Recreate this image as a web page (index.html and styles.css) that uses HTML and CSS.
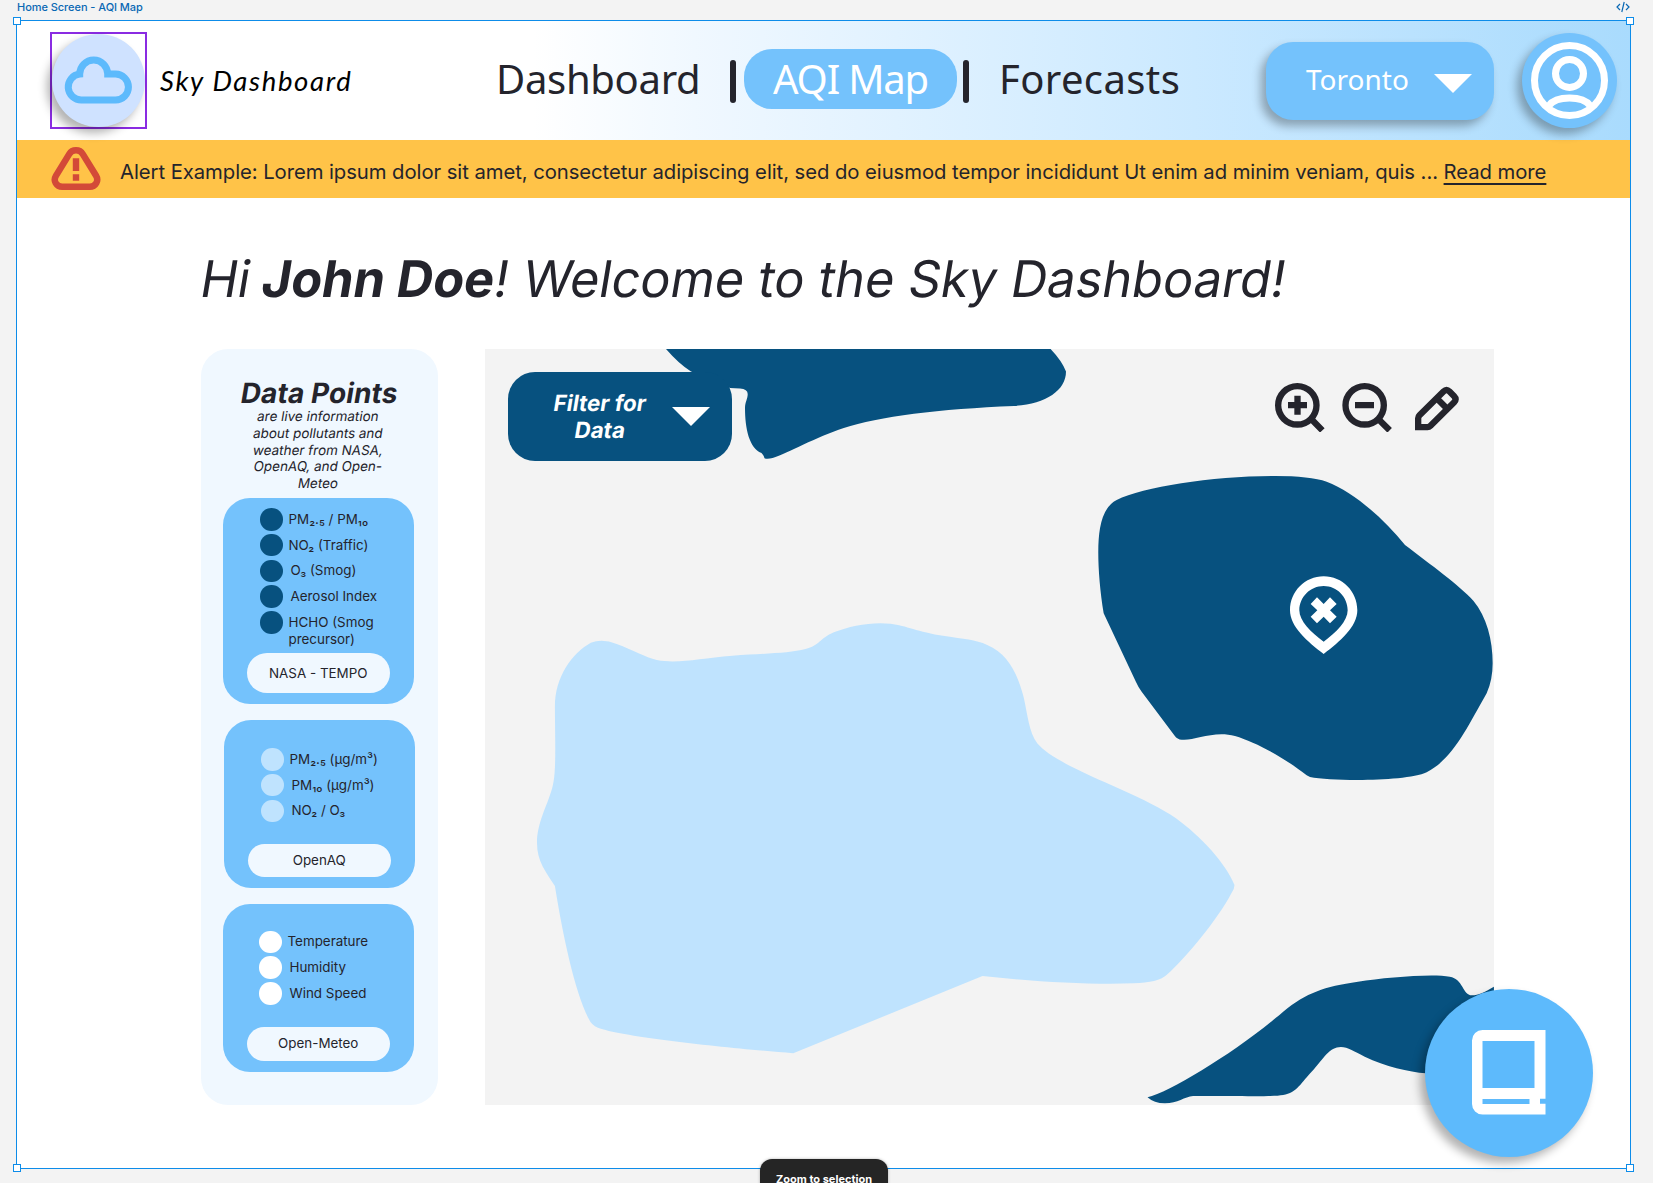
FILE: index.html
```html
<!DOCTYPE html>
<html lang="en">
<head>
<meta charset="utf-8">
<title>Home Screen - AQI Map</title>
<link rel="stylesheet" href="styles.css">
</head>
<body>
<div class="canvas-bar">
  <span class="frame-name">Home Screen - AQI Map</span>
  <svg class="code-icon" viewBox="0 0 14 12"><path d="M4 3 1 6l3 3M10 3l3 3-3 3M8.2 1 5.8 11"/></svg>
</div>
<div class="frame">
  <i class="handle tl"></i><i class="handle tr"></i><i class="handle bl"></i><i class="handle br"></i>
  <header class="header">
    <div class="logo">
      <svg viewBox="0 0 93 93"><path d="M29.700 66a13 13 0 0 1-2-25.900a14 14 0 0 1 28 0h7.800a12.950 12.950 0 0 1 0 25.900z"/></svg>
    </div>
    <span class="brand">Sky Dashboard</span>
    <nav class="nav">
      <a class="nav-dash">Dashboard</a>
      <i class="bar"></i>
      <a class="nav-map">AQI Map</a>
      <i class="bar bar2"></i>
      <a class="nav-fore">Forecasts</a>
    </nav>
    <div class="city"><span>Toronto</span><svg viewBox="0 0 38 19"><path d="M0 0h38L19 19z"/></svg></div>
    <div class="avatar">
      <svg viewBox="0 0 95 95">
        <circle cx="47.500" cy="47.500" r="35"/>
        <circle cx="47.500" cy="40.500" r="14"/>
        <path d="M27 72.500c4-5.500 12-7.500 20.500-7.500s16.500 2 20.500 7.500"/>
      </svg>
    </div>
  </header>
  <div class="alert">
    <svg viewBox="0 0 50 46">
      <path class="tri" d="M18.200 8.100c3-5 10.600-5 13.600 0l13.300 21.700c3 5-.5 11-6.300 11H11.200c-5.800 0-9.300-6-6.300-11z"/>
      <path class="mark" d="M21.800 12.300h6.400V25h-6.400zM21.800 28.300h6.400v6.400h-6.400z"/>
    </svg>
    <p><span class="alert-text">Alert Example: Lorem ipsum dolor sit amet, consectetur adipiscing elit, sed do eiusmod tempor incididunt Ut enim ad minim veniam, quis ...</span> <a>Read more</a></p>
  </div>
  <h1 class="slant">Hi <b>John Doe</b><span class="welcome">! Welcome to the Sky Dashboard!</span></h1>
  <main class="content">
    <aside class="panel">
      <h2 class="slant">Data Points</h2>
      <p class="intro"><span class="slant">are live information</span> <span class="slant">about pollutants and</span> <span class="slant">weather from NASA,</span> <span class="slant">OpenAQ, and Open-</span> <span class="slant">Meteo</span></p>
      <section class="card nasa">
        <ul>
          <li>PM₂.₅ / PM₁₀</li>
          <li>NO₂ (Traffic)</li>
          <li class="in">O₃ (Smog)</li>
          <li class="in">Aerosol Index</li>
          <li>HCHO (Smog<br>precursor)</li>
        </ul>
        <div class="source">NASA - TEMPO</div>
      </section>
      <section class="card openaq">
        <ul>
          <li>PM₂.₅ (µg/m³)</li>
          <li class="in">PM₁₀ (µg/m³)</li>
          <li class="in">NO₂ / O₃</li>
        </ul>
        <div class="source">OpenAQ</div>
      </section>
      <section class="card meteo">
        <ul>
          <li>Temperature</li>
          <li class="in">Humidity</li>
          <li class="in">Wind Speed</li>
        </ul>
        <div class="source">Open-Meteo</div>
      </section>
    </aside>
    <div class="map">
      <svg class="land" viewBox="485 349 1009 756">
        <path class="dark" d="M666 349Q679 364 691 371.500L730 388L740 388.500Q747.700 389 747.700 394C747.700 399 745 402 745 408C745 428 749 448 761.500 453Q763.500 455 764.500 458.200Q767 459.500 772.600 458C788 453 816 437 843.800 428C878 416.500 940 409 1014 406C1045 404 1066 391 1066 371.500Q1062 361 1050.600 349z"/>
        <g transform="translate(1080 340) scale(.33333)">
          <path class="dark" d="M71 820C55 720 50 620 60 565Q71 500 110 480C190 440 400 408 585 408Q690 408 740 425C820 455 910 535 975 615C1050 672 1140 738 1180 782C1220 830 1238 900 1238 970Q1238 1020 1220 1060C1160 1165 1120 1255 1040 1297C980 1325 760 1325 690 1311L680 1306C620 1258 530 1207 465 1188C400 1170 340 1204 305 1199Q292 1198 284 1187L185 1055Q175 1042 168 1026z"/>
          <path class="pin" fill-rule="evenodd" d="M731 709C787 709 832 754 832 811C832 860 780 905 731 942C682 905 630 860 630 811C630 754 675 709 731 709zM731 738C691 738 658 771 658 811C658 843 693 877 731 905C769 877 803 843 803 811C803 771 771 738 731 738z"/>
          <path class="pin" d="M711 772l20 20 19-20 20 20-20 19 20 19-20 20-19-20-20 20-19-20 20-19-20-19z"/>
        </g>
        <path class="light" transform="translate(520 600) scale(.47193 .33333)" d="M74 320C74 230 110 160 150 128Q175 115 205 132C240 150 265 172 290 180C335 192 380 175 450 167C520 160 570 160 605 147C635 137 635 115 665 97C700 77 745 65 785 71C820 77 840 95 900 108C940 117 965 118 990 135C1035 162 1055 225 1067 290C1076 345 1078 395 1096 430C1140 505 1310 575 1390 655C1445 712 1495 790 1514 855Q1514 866 1508 878C1480 955 1410 1075 1370 1125Q1352 1148 1300 1150C1210 1155 1090 1145 980 1128L579 1360C450 1345 220 1312 165 1283Q152 1277 145 1255C115 1170 90 1000 74 858C55 815 36 785 36 728C36 660 65 600 71 545C77 500 74 400 74 320z"/>
        <path class="dark" transform="translate(1120 950) scale(.33992 .33333)" d="M81 442C150 425 350 300 480 185C550 127 600 110 700 95C780 82 920 70 970 80C1010 87 1008 135 1035 136C1055 136 1075 125 1100 110L1100 370L900 370C850 365 780 350 720 320C690 305 670 291 650 291C615 291 600 325 565 364C535 395 520 430 480 435C450 440 400 438 215 438C190 440 170 460 132 460Q100 460 81 442z"/>
      </svg>
      <div class="filter"><div><span class="slant">Filter for</span> <span class="slant">Data</span></div><svg viewBox="0 0 38 19"><path d="M0 0h38L19 19z"/></svg></div>
      <svg class="tools" viewBox="585 125 555 152">
        <g class="line">
          <circle cx="652" cy="195" r="57.500"/><path d="M690 232 727 270M624 194.500h57M652.500 166v57"/>
          <circle cx="854" cy="195" r="57.500"/><path d="M891 232 929 270M825 194.500h57"/>
          <path d="M1014.500 260.500v-27q0-5 4-9l72-71q9-9 18 0l14 14q9 9 0 18l-71 71q-4 4-9 4zM1073 177l24 24"/>
        </g>
      </svg>
    </div>
  </main>
  <div class="fab">
    <svg viewBox="1472.500 1030 73.500 84.500"><path fill-rule="evenodd" d="M1483 1030h63v68.700h-5.500v5h5.500v10.800h-63a10.500 10.500 0 0 1-10.500-10.500v-63.500a10.500 10.500 0 0 1 10.500-10.500zM1483 1041v47h52v-47zM1483 1099v5h47v-5z"/></svg>
  </div>
</div>
<div class="tip">Zoom to selection</div>
</body>
</html>
```
FILE: styles.css
```css
* { box-sizing: border-box; margin: 0; padding: 0; }
body {
  width: 1653px; height: 1183px; overflow: hidden; position: relative;
  background: #f3f3f3; color: #24242c;
  font-family: Inter, "Liberation Sans", sans-serif;
}
svg { display: block; }
.slant { display: block; transform: skewX(-9.4deg); }
.canvas-bar { height: 20px; padding: 0 23px 0 17px; display: flex; justify-content: space-between; }
.frame-name { font-size: 11px; line-height: 14px; font-weight: 500; color: #0a68b4; letter-spacing: -.05px; white-space: nowrap; }
.code-icon { width: 14px; height: 12px; margin-top: 1px; fill: none; stroke: #0a68b4; stroke-width: 1.2; }
.frame { position: relative; width: 1615px; height: 1149px; margin-left: 16px; border: 1px solid #0d8ce9; background: #fff; }
.handle { position: absolute; width: 8px; height: 8px; background: #fff; border: 1px solid #0d8ce9; z-index: 3; }
.tl { left: -4px; top: -4px; } .tr { right: -4px; top: -4px; }
.bl { left: -4px; bottom: -4px; } .br { right: -4px; bottom: -4px; }

.header {
  height: 119px; display: flex; align-items: center;
  background: linear-gradient(90deg, #fff 32%, #f0f8ff 42%, #cbe9ff 73%, #a9dbfd 100%);
}
.logo { flex: none; width: 97px; height: 97px; margin-left: 33px; border: 2px solid #8a2be2; }
.logo svg { width: 93px; height: 93px; border-radius: 50%; background: #cfe2ff; box-shadow: -5px 6px 10px rgba(0,0,0,.3); fill: none; stroke: #5dbafc; stroke-width: 7; }
.brand { flex: none; width: 200px; margin-left: 13px; font: italic 27.500px/40px Lato, sans-serif; color: #000; letter-spacing: 1.650px; white-space: nowrap; }
.nav { flex: none; width: 690px; margin-left: 136px; display: flex; align-items: center; font: 40px/60px "Noto Sans", sans-serif; white-space: nowrap; }
.nav-dash { width: 234px; margin-bottom: 4px; letter-spacing: -.3px; }
.bar { width: 6px; height: 43px; border-radius: 3px; background: #24242c; margin-top: 2px; }
.nav-map { width: 213px; height: 60px; margin: 0 6px 4px 8px; border-radius: 28px; background: #74c2fc; color: #fff; text-align: center; letter-spacing: -1.200px; }
.nav-fore { margin: 0 0 4px 30px; letter-spacing: .4px; }
.city { flex: none; width: 228px; height: 78px; margin-left: 80px; padding: 0 22px 0 40px; display: flex; align-items: center; justify-content: space-between; border-radius: 27px; background: #74c2fc; color: #fff; font: 28px/40px "Noto Sans", sans-serif; box-shadow: -5px 6px 10px rgba(0,0,0,.3); }
.city span { margin-bottom: 3px; }
.city svg { width: 38px; height: 19px; fill: #fff; margin-top: 6px; }
.avatar { flex: none; width: 95px; height: 95px; margin-left: 28px; border-radius: 50%; background: #74c2fc; box-shadow: -5px 6px 10px rgba(0,0,0,.3); }
.avatar svg { fill: none; stroke: #fff; stroke-width: 7; }

.alert { height: 58px; display: flex; align-items: center; background: #ffc348; }
.alert svg { width: 50px; height: 46px; margin-left: 34px; flex: none; }
.tri { fill: none; stroke: #d34a38; stroke-width: 6.500; }
.mark { fill: #d34a38; }
.alert p { margin: 6px 0 0 19px; font-size: 20.300px; line-height: 26px; letter-spacing: -.065px; white-space: nowrap; }
.alert a { text-decoration: underline; text-decoration-thickness: 1.500px; text-underline-offset: 4px; }

h1 { margin: 50px 0 0 184px; height: 66px; font-size: 50.500px; line-height: 62px; font-weight: 400; letter-spacing: -.3px; white-space: nowrap; }
h1 b { font-weight: 700; margin-left: -2px; letter-spacing: -.05px; }
.welcome { letter-spacing: -.05px; }

.content { display: flex; margin: 35px 0 0 184px; gap: 47px; height: 756px; }
.panel { width: 237px; padding-top: 28px; border-radius: 27px; background: #f0f8ff; }
h2 { font-size: 28px; line-height: 32px; font-weight: 700; text-align: center; letter-spacing: .1px; white-space: nowrap; }
.intro { margin: -1px 14px 7px 11px; font-size: 13.450px; line-height: 16.800px; text-align: center; height: 83px; }
.card { display: flex; flex-direction: column; justify-content: space-between; align-items: center; width: 190.500px; margin-left: 22px; border-radius: 27px; background: #74c2fc; padding-bottom: 11px; }
.card ul { list-style: none; align-self: flex-start; margin-left: 37px; }
.card li { position: relative; height: 25.800px; padding-left: 28.500px; font-size: 13.400px; line-height: 17px; padding-top: 2.900px; white-space: nowrap; }
.card li::before { content: ""; position: absolute; left: 0; top: 0; width: 22.500px; height: 22.500px; border-radius: 50%; background: var(--dot); }
.card li.in { padding-left: 30.500px; }
.nasa { --dot: #07517f; height: 206px; padding-top: 10px; }
.openaq { --dot: #bfe3fe; height: 168px; margin: 16px 0 15.500px 23px; padding-top: 28px; }
.meteo { --dot: #fff; height: 168px; padding-top: 27px; }
.meteo ul { margin-left: 36px; }
.source { width: 143px; height: 33.500px; line-height: 33.500px; border-radius: 20px; background: #f0f8ff; font-size: 13.400px; text-align: center; }
.nasa .source { height: 40px; line-height: 41px; }

.map { position: relative; width: 1009px; background: #f3f3f3; overflow: hidden; }
.land { width: 1009px; height: 756px; }
.dark { fill: #07517f; }
.light { fill: #bfe3fe; }
.pin { fill: #fff; }
.filter { position: absolute; left: 23px; top: 22.500px; width: 224px; height: 89.500px; padding: 0 22px 0 45.500px; border-radius: 27px; background: #07517f; color: #fff; display: flex; align-items: center; justify-content: space-between; font-size: 22.300px; line-height: 27px; font-weight: 700; text-align: center; white-space: nowrap; }
.filter svg { width: 38px; height: 19px; fill: #fff; }
.tools { position: absolute; left: 790px; top: 32.700px; width: 185px; height: 50.700px; }
.line { fill: none; stroke: #24242c; stroke-width: 19; }

.fab { position: absolute; left: 1408px; top: 968px; width: 168px; height: 168px; border-radius: 50%; background: #5dbafc; box-shadow: -5px 6px 10px rgba(0,0,0,.3); display: flex; align-items: center; justify-content: center; }
.fab svg { width: 73.500px; height: 84.500px; margin-bottom: 1px; fill: #fff; }
.tip { position: absolute; left: 760px; top: 1159px; width: 128px; height: 40px; padding-top: 12px; border-radius: 12px; background: #252525; color: #fff; font-size: 11px; line-height: 16px; font-weight: 700; text-align: center; white-space: nowrap; box-shadow: 0 0 3px rgba(0,0,0,.3); }
```
